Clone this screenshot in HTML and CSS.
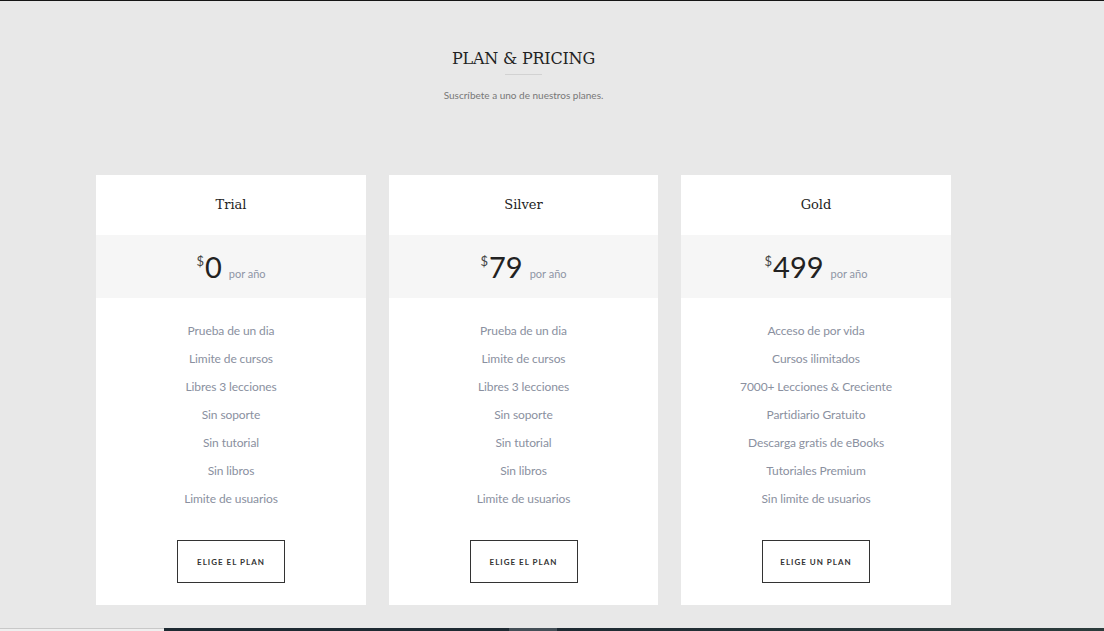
FILE: index.html
```html
<!DOCTYPE html>
<html lang="es">
<head>
<meta charset="utf-8">
<title>Plan &amp; Pricing</title>
<link rel="stylesheet" href="styles.css">
</head>
<body>
<section class="pricing">
  <header class="pricing-head">
    <h2 class="pricing-title">PLAN &amp; PRICING</h2>
    <div class="divider"></div>
    <p class="pricing-sub">Suscríbete a uno de nuestros planes.</p>
  </header>
  <div class="plans">
    <div class="plan">
      <h3 class="plan-name">Trial</h3>
      <div class="plan-price"><span class="cur">$</span><span class="amount">0</span><span class="per">por año</span></div>
      <ul class="features">
        <li>Prueba de un dia</li>
        <li>Limite de cursos</li>
        <li>Libres 3 lecciones</li>
        <li>Sin soporte</li>
        <li>Sin tutorial</li>
        <li>Sin libros</li>
        <li>Limite de usuarios</li>
      </ul>
      <a class="plan-btn" href="#">ELIGE EL PLAN</a>
    </div>
    <div class="plan">
      <h3 class="plan-name">Silver</h3>
      <div class="plan-price"><span class="cur">$</span><span class="amount">79</span><span class="per">por año</span></div>
      <ul class="features">
        <li>Prueba de un dia</li>
        <li>Limite de cursos</li>
        <li>Libres 3 lecciones</li>
        <li>Sin soporte</li>
        <li>Sin tutorial</li>
        <li>Sin libros</li>
        <li>Limite de usuarios</li>
      </ul>
      <a class="plan-btn" href="#">ELIGE EL PLAN</a>
    </div>
    <div class="plan">
      <h3 class="plan-name">Gold</h3>
      <div class="plan-price"><span class="cur">$</span><span class="amount">499</span><span class="per">por año</span></div>
      <ul class="features">
        <li>Acceso de por vida</li>
        <li>Cursos ilimitados</li>
        <li>7000+ Lecciones &amp; Creciente</li>
        <li>Partidiario Gratuito</li>
        <li>Descarga gratis de eBooks</li>
        <li>Tutoriales Premium</li>
        <li>Sin limite de usuarios</li>
      </ul>
      <a class="plan-btn" href="#">ELIGE UN PLAN</a>
    </div>
  </div>
</section>
<footer class="bottom-strip">
  <div class="strip-light"></div>
  <div class="strip-dark"></div>
  <div class="strip-mid"></div>
  <div class="strip-dark strip-grad"></div>
</footer>
</body>
</html>
```

FILE: styles.css
```css
* { box-sizing: border-box; }
html, body { height: 100%; }
body {
  margin: 0;
  background: #e8e8e8;
  border-top: 1px solid #151515;
  font-family: Lato, "Open Sans", sans-serif;
  overflow: hidden;
}
.pricing {
  padding: 0 0 0 96px;
  width: 951px;
}
.pricing-head {
  text-align: center;
  padding-top: 46px;
}
.pricing-title {
  margin: 0;
  font-family: "DejaVu Serif", serif;
  font-weight: 400;
  font-size: 16px;
  line-height: 24px;
  color: #222;
  letter-spacing: -0.2px;
}
.divider {
  width: 37px;
  height: 1px;
  background: #d2d2d2;
  margin: 3px auto 0;
}
.pricing-sub {
  margin: 12px 0 0;
  font-size: 10px;
  line-height: 16px;
  color: #777;
}
.plans {
  margin-top: 72px;
  display: grid;
  grid-template-columns: 270px 269px 270px;
  column-gap: 23px;
}
.plan {
  background: #fff;
  text-align: center;
  padding-bottom: 22px;
  display: flex;
  flex-direction: column;
  align-items: center;
}
.plan-name {
  margin: 0;
  height: 60px;
  width: 100%;
  display: flex;
  align-items: center;
  justify-content: center;
  font-family: "DejaVu Serif", serif;
  font-weight: 400;
  font-size: 13px;
  color: #222;
  padding-bottom: 2px;
}
.plan-price {
  width: 100%;
  height: 63px;
  background: #f6f6f6;
  display: flex;
  justify-content: center;
  align-items: baseline;
  padding-top: 12px;
}
.cur {
  font-size: 13px;
  color: #444;
  align-self: flex-start;
  margin-top: 6px;
  margin-right: 1px;
}
.amount {
  font-size: 29px;
  line-height: 40px;
  color: #222;
}
.per {
  font-size: 11px;
  color: #8e95a5;
  margin-left: 7px;
}
.features {
  list-style: none;
  margin: 0;
  padding: 19px 0 0;
  width: 100%;
}
.features li {
  font-size: 12px;
  line-height: 28px;
  color: #8a90a0;
  letter-spacing: -0.1px;
}
.plan-btn {
  margin-top: 27px;
  width: 108px;
  height: 43px;
  border: 1px solid #333;
  display: flex;
  align-items: center;
  justify-content: center;
  font-size: 8px;
  font-weight: 700;
  letter-spacing: 1px;
  color: #333;
  text-decoration: none;
}
.bottom-strip {
  position: fixed;
  left: 0;
  right: 0;
  bottom: 0;
  height: 3px;
  display: flex;
}
.strip-light {
  width: 164px;
  background: #efefef;
  border-top: 1px solid #c8c8c8;
}
.strip-dark {
  width: 345px;
  background: #1e2a32;
}
.strip-mid {
  width: 48px;
  background: #444f57;
}
.strip-grad {
  flex: 1;
  background: linear-gradient(90deg, #1e2a32, #2c3c3c);
}
```
